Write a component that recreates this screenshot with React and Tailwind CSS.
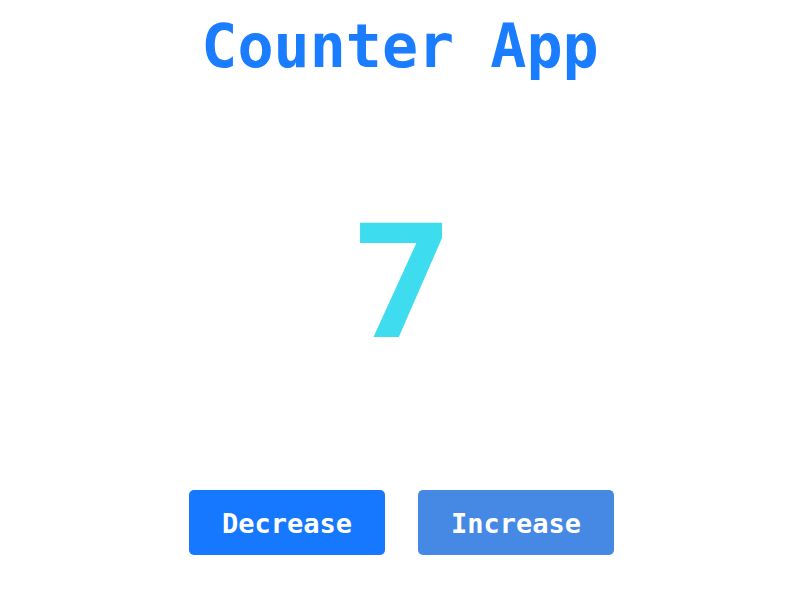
export default function App() {
  return (
    <div className="w-[800px] h-[600px] bg-white flex flex-col items-center" style={{ fontFamily: '"DejaVu Sans Mono", monospace' }}>
      <h1 className="mt-[14px] text-[60px] leading-[64px] font-bold text-[#1a7cff]">Counter App</h1>
      <div className="mt-[117px] ml-[3px] text-[160px] leading-[160px] font-bold text-[#3ddcee]" style={{ fontFamily: '"Noto Sans", sans-serif' }}>7</div>
      <div className="mt-[135px] ml-[3px] flex gap-[33px]">
        <button className="w-[196px] h-[65px] pt-[3px] rounded-[5px] bg-[#1677ff] text-white font-bold text-[27px]">Decrease</button>
        <button className="w-[196px] h-[65px] pt-[3px] rounded-[5px] bg-[#4689e5] text-white font-bold text-[27px]">Increase</button>
      </div>
    </div>
  );
}
